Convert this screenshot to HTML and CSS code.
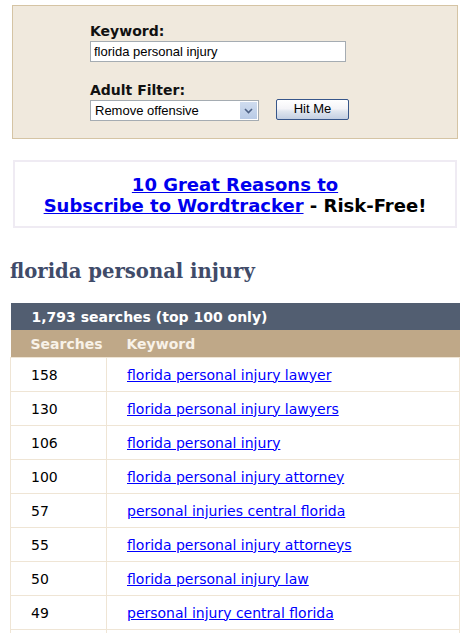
FILE: index.html
```html
<!DOCTYPE html>
<html>
<head>
<meta charset="utf-8">
<link rel="stylesheet" href="styles.css">
</head>
<body>
<div class="page">
  <form class="search-box">
    <label class="field-label" for="kw">Keyword:</label>
    <input class="text-input" id="kw" type="text" value="florida personal injury">
    <label class="field-label filter-label" for="flt">Adult Filter:</label>
    <div class="filter-row">
      <div class="select-wrap">
        <select class="select" id="flt"><option>Remove offensive</option></select>
        <span class="select-arrow"><svg width="9" height="6" viewBox="0 0 9 6"><path d="M1 1 L4.5 4.5 L8 1" fill="none" stroke="#4d6185" stroke-width="1.6"/></svg></span>
      </div>
      <button class="hit-btn" type="button">Hit Me</button>
    </div>
  </form>

  <div class="promo">
    <a href="#" class="promo-link">10 Great Reasons to</a><br>
    <a href="#" class="promo-link">Subscribe to Wordtracker</a> - Risk-Free!
  </div>

  <h1 class="title">florida personal injury</h1>

  <table class="results">
    <tr class="caption-row"><td colspan="2">1,793 searches (top 100 only)</td></tr>
    <tr class="head-row"><th class="col-num">Searches</th><th class="col-kw">Keyword</th></tr>
    <tr><td class="col-num">158</td><td class="col-kw"><a href="#">florida personal injury lawyer</a></td></tr>
    <tr><td class="col-num">130</td><td class="col-kw"><a href="#">florida personal injury lawyers</a></td></tr>
    <tr><td class="col-num">106</td><td class="col-kw"><a href="#">florida personal injury</a></td></tr>
    <tr><td class="col-num">100</td><td class="col-kw"><a href="#">florida personal injury attorney</a></td></tr>
    <tr><td class="col-num">57</td><td class="col-kw"><a href="#">personal injuries central florida</a></td></tr>
    <tr><td class="col-num">55</td><td class="col-kw"><a href="#">florida personal injury attorneys</a></td></tr>
    <tr><td class="col-num">50</td><td class="col-kw"><a href="#">florida personal injury law</a></td></tr>
    <tr><td class="col-num">49</td><td class="col-kw"><a href="#">personal injury central florida</a></td></tr>
    <tr><td class="col-num"></td><td class="col-kw"></td></tr>
  </table>
</div>
</body>
</html>
```

FILE: styles.css
```css
html, body {
  margin: 0;
  padding: 0;
  background: #ffffff;
  overflow: hidden;
}
body {
  font-family: "DejaVu Sans", Verdana, sans-serif;
  color: #000;
}
.page {
  padding-top: 5px;
}
.search-box {
  margin: 0 0 0 12px;
  width: 446px;
  height: 134px;
  box-sizing: border-box;
  background: #f0e9dd;
  border: 1px solid #d5c4a4;
  padding: 17px 0 0 77px;
  display: flex;
  flex-direction: column;
  align-items: flex-start;
}
.field-label {
  font-weight: bold;
  font-size: 14px;
  line-height: 17px;
  color: #111;
}
.text-input {
  margin: 1px 0 0 0;
  width: 256px;
  height: 21px;
  box-sizing: border-box;
  border: 1px solid #a5acb2;
  padding: 0 3px;
  font-family: "Liberation Sans", Arial, sans-serif;
  font-size: 13px;
  color: #000;
  background: #fff;
  outline: none;
}
.filter-label {
  margin-top: 20px;
}
.filter-row {
  display: flex;
  align-items: flex-start;
  gap: 17px;
}
.select-wrap {
  margin-top: 1px;
  width: 169px;
  height: 21px;
  box-sizing: border-box;
  border: 1px solid #a5acb2;
  background: #fff;
  display: flex;
}
.select {
  -webkit-appearance: none;
  appearance: none;
  flex: 1;
  min-width: 0;
  border: none;
  background: transparent;
  font-family: "Liberation Sans", Arial, sans-serif;
  font-size: 13px;
  color: #000;
  padding: 0 0 0 4px;
  margin: 0;
  height: 19px;
  outline: none;
}
.select-arrow {
  width: 17px;
  height: 17px;
  margin: 1px 1px 1px 0;
  background: linear-gradient(#cfdcef, #b9cbe6);
  border: 0;
  display: flex;
  align-items: center;
  justify-content: center;
}
.hit-btn {
  width: 73px;
  height: 21px;
  box-sizing: border-box;
  border: 1px solid #37568a;
  border-radius: 2px;
  background: linear-gradient(#ffffff 0%, #f4f4f8 45%, #dfe5ee 60%, #c3cfe2 100%);
  font-family: "Liberation Sans", Arial, sans-serif;
  font-size: 13px;
  color: #000;
  padding: 0 0 2px 0;
  line-height: 16px;
}
.promo {
  margin: 21px 0 0 13px;
  width: 444px;
  height: 68px;
  box-sizing: border-box;
  border: 2px solid #efebf3;
  text-align: center;
  font-weight: bold;
  font-size: 18px;
  line-height: 21px;
  padding-top: 12px;
  color: #000;
}
.promo-link {
  color: #0000ee;
  text-decoration: underline;
}
.title {
  margin: 32px 0 0 10px;
  font-family: "DejaVu Serif", Georgia, serif;
  font-weight: bold;
  font-size: 19.6px;
  line-height: 24px;
  color: #404b69;
}
.results {
  margin: 19px 0 0 10px;
  width: 450px;
  border-collapse: collapse;
  font-size: 14px;
}
.results td, .results th {
  padding: 0 0 0 20px;
  text-align: left;
}
.caption-row td {
  background: #525e71;
  color: #fff;
  font-weight: bold;
  height: 27px;
  padding-left: 21px;
}
.head-row th {
  background: #bfa888;
  color: #f8f2e8;
  font-weight: bold;
  height: 27px;
}
.results tr:not(.caption-row):not(.head-row) td {
  border: 1px solid #efe5d5;
  height: 33px;
}
.col-num {
  width: 75px;
}
.results a {
  color: #0000ff;
  text-decoration: underline;
}
```
